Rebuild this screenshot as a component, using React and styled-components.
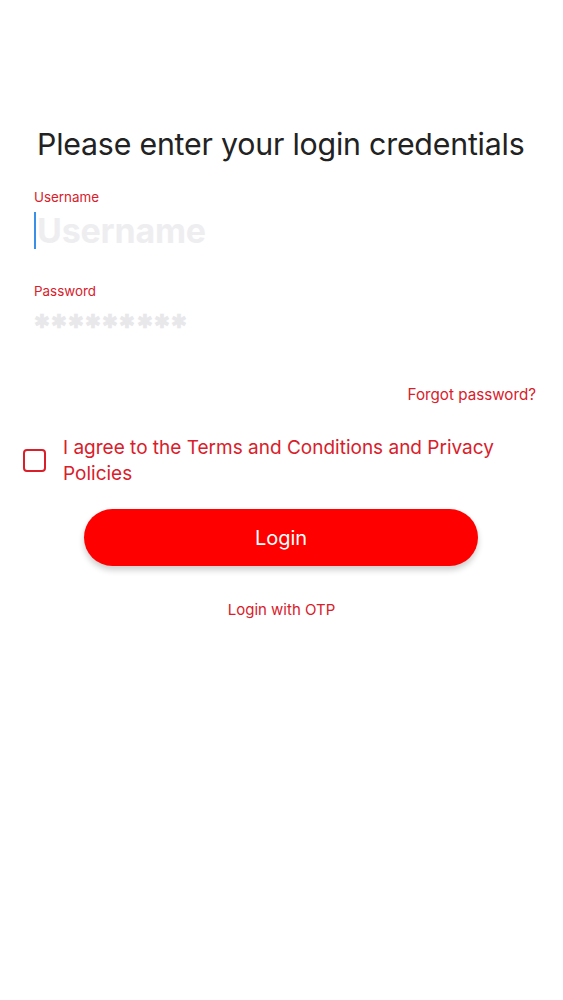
import styled, { createGlobalStyle } from "styled-components";

const Global = createGlobalStyle`
	html, body {
		margin: 0;
		padding: 0;
		background: #ffffff;
		font-family: Inter, "Liberation Sans", sans-serif;
	}
`;

const RED = "#d9202a";

const Screen = styled.div`
	width: 563px;
	min-height: 1000px;
	box-sizing: border-box;
	padding: 124px 27px 0 34px;
	display: flex;
	flex-direction: column;
`;

const Title = styled.h1`
	margin: 0 0 0 3px;
	font-size: 30.3px;
	font-weight: 400;
	line-height: 40px;
	color: #222222;
	letter-spacing: -0.2px;
	white-space: nowrap;
`;

const Field = styled.div`
	display: flex;
	flex-direction: column;
	margin-top: ${(p) => p.$top}px;
`;

const Label = styled.label`
	font-size: 13.4px;
	line-height: 18px;
	color: ${RED};
`;

const InputRow = styled.div`
	display: flex;
	align-items: center;
	height: ${(p) => p.$h}px;
	margin-top: ${(p) => p.$gap}px;
`;

const Caret = styled.span`
	width: 2px;
	height: 37px;
	background: #3a8fe6;
	margin-right: 1px;
`;

const Placeholder = styled.span`
	font-size: 34px;
	font-weight: 700;
	color: #eeeef1;
	letter-spacing: -0.2px;
`;

const Stars = styled.span`
	font-size: 19px;
	font-weight: 700;
	color: #e8e8ea;
	letter-spacing: 1.1px;
`;

const Forgot = styled.a`
	align-self: flex-end;
	margin-top: 49px;
	font-size: 15.2px;
	line-height: 20px;
	color: ${RED};
	text-decoration: none;
`;

const AgreeRow = styled.div`
	display: flex;
	align-items: center;
	gap: 17px;
	margin: 30px 0 0 -11px;
`;

const Box = styled.span`
	flex: none;
	width: 19px;
	height: 19px;
	border: 2.5px solid ${RED};
	border-radius: 4px;
	margin-top: -2px;
`;

const AgreeText = styled.span`
	font-size: 19px;
	line-height: 26px;
	color: ${RED};
`;

const LoginButton = styled.button`
	align-self: center;
	margin: 22px 0 0 -8px;
	width: 394px;
	height: 57px;
	border: none;
	border-radius: 29px;
	background: #fe0000;
	color: #ffffff;
	font-family: inherit;
	font-size: 20px;
	box-shadow: 0 4px 6px rgba(0, 0, 0, 0.2);
`;

const OtpLink = styled.a`
	align-self: center;
	margin: 34px 0 0 -7px;
	font-size: 15px;
	line-height: 20px;
	color: ${RED};
	text-decoration: none;
`;

export default function App() {
	return (
		<>
			<Global />
			<Screen>
				<Title>Please enter your login credentials</Title>
				<Field $top={24}>
					<Label>Username</Label>
					<InputRow $h={40} $gap={4}>
						<Caret />
						<Placeholder>Username</Placeholder>
					</InputRow>
				</Field>
				<Field $top={32}>
					<Label>Password</Label>
					<InputRow $h={30} $gap={6}>
						<Stars>✱✱✱✱✱✱✱✱✱</Stars>
					</InputRow>
				</Field>
				<Forgot>Forgot password?</Forgot>
				<AgreeRow>
					<Box />
					<AgreeText>I agree to the Terms and Conditions and Privacy Policies</AgreeText>
				</AgreeRow>
				<LoginButton>Login</LoginButton>
				<OtpLink>Login with OTP</OtpLink>
			</Screen>
		</>
	);
}
